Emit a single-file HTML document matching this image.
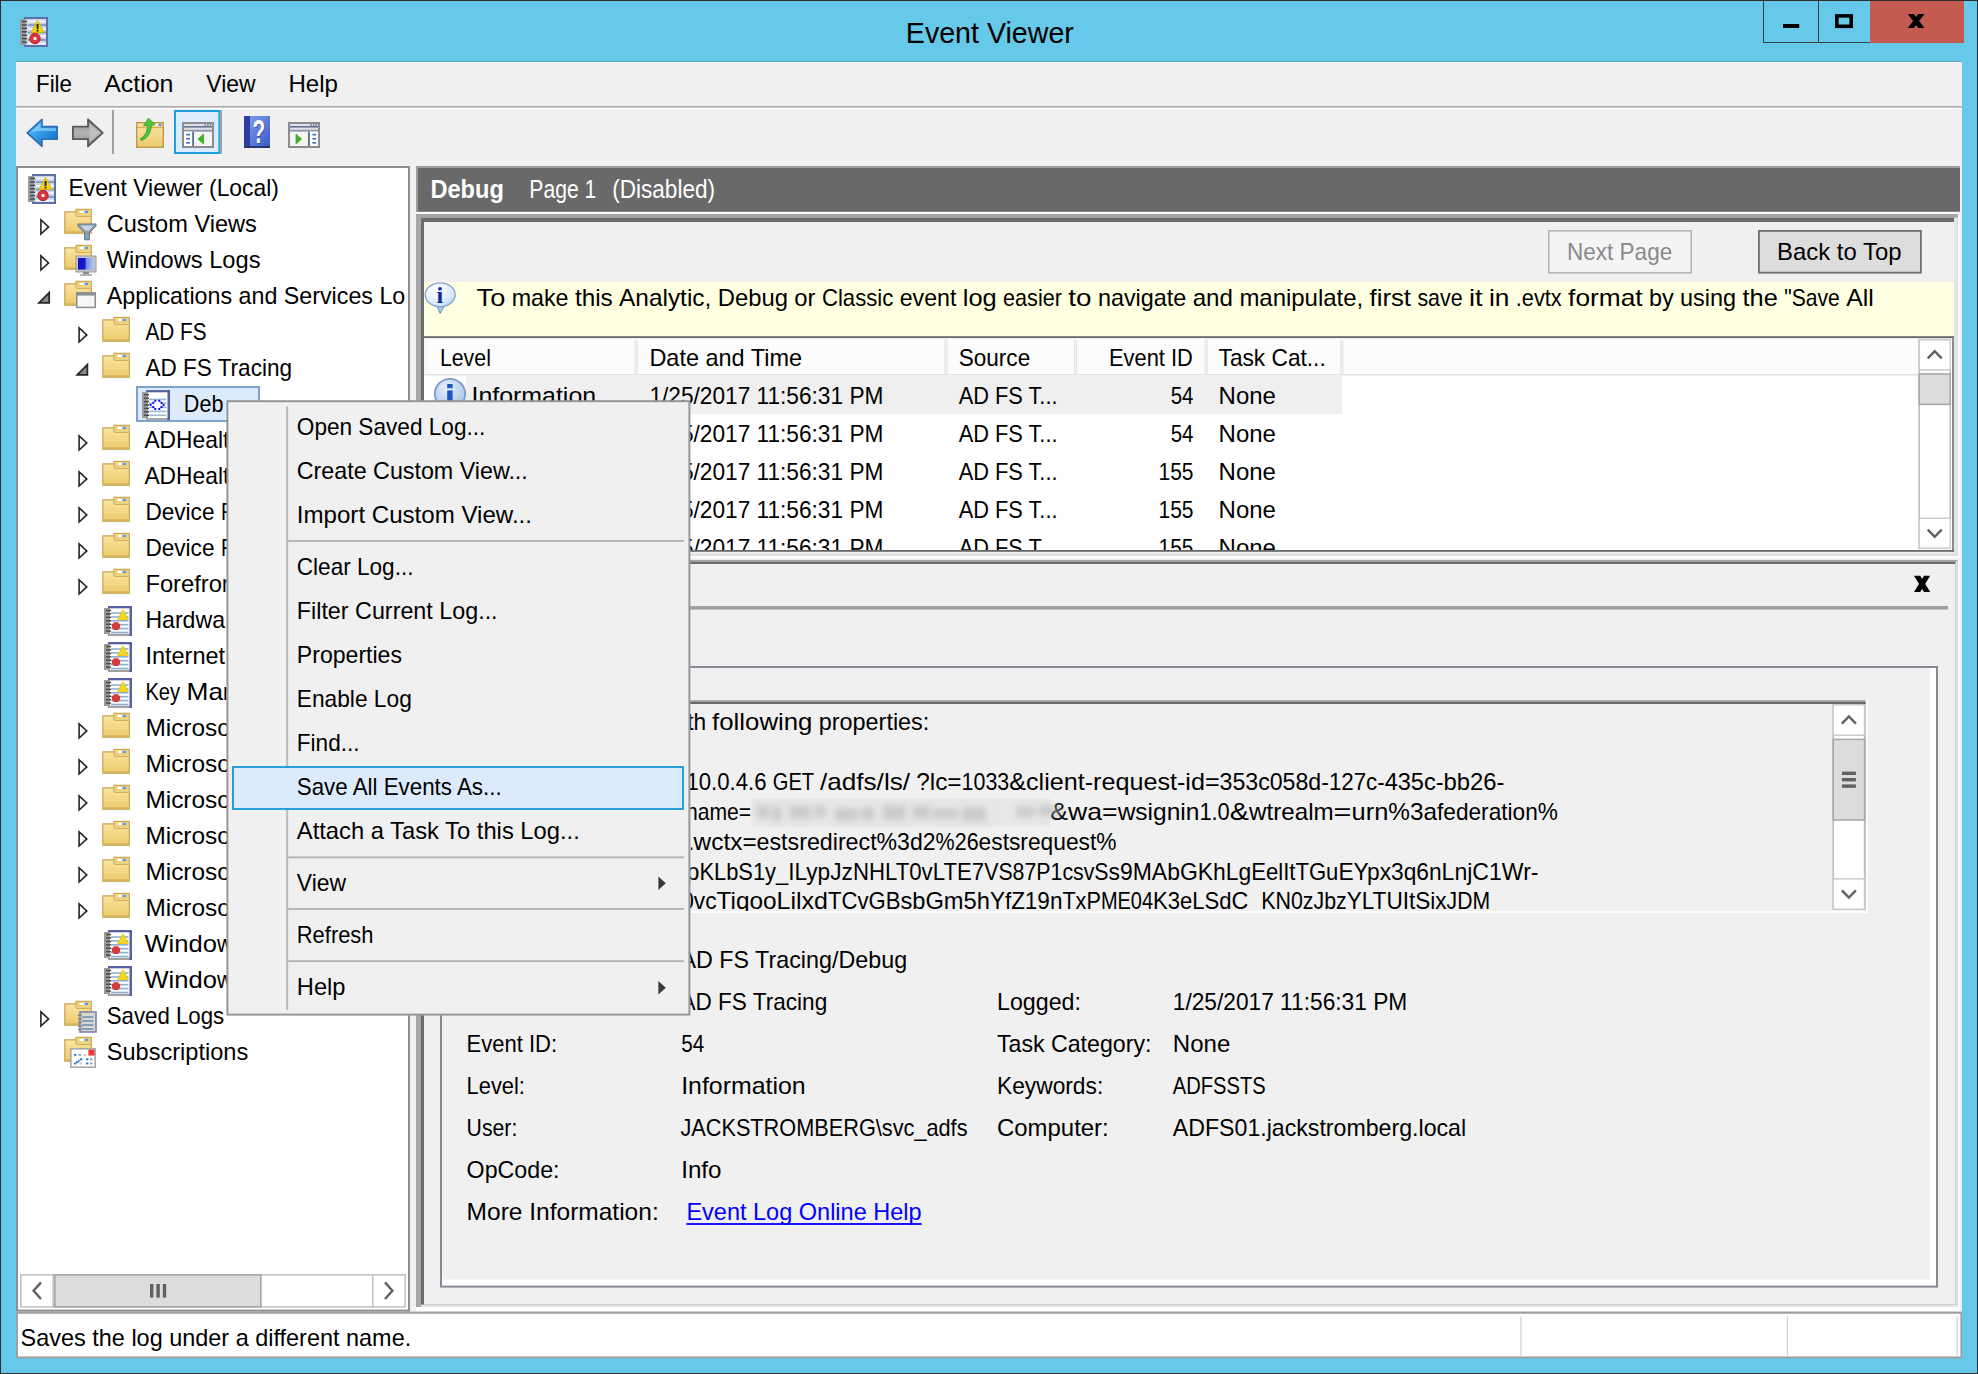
<!DOCTYPE html>
<html lang="en"><head><meta charset="utf-8"><title>Event Viewer</title>
<style>
html,body{margin:0;padding:0;background:#67C9EA}
body{width:1978px;height:1374px}
svg{display:block}
text{font-family:"Liberation Sans",sans-serif;white-space:pre}
</style></head>
<body>
<svg width="1978" height="1374" viewBox="0 0 1978 1374">
<defs>
<linearGradient id="gFold" x1="0" y1="0" x2="0" y2="1"><stop offset="0" stop-color="#FBE8A8"/><stop offset="1" stop-color="#EDC96C"/></linearGradient>
<linearGradient id="gBack" x1="0" y1="0" x2="1" y2="1"><stop offset="0" stop-color="#5CCBFF"/><stop offset="1" stop-color="#0A64C8"/></linearGradient>
<linearGradient id="gFwd" x1="0" y1="0" x2="0" y2="1"><stop offset="0" stop-color="#8A8A8A"/><stop offset="0.5" stop-color="#B4B4B4"/><stop offset="1" stop-color="#8A8A8A"/></linearGradient>
<linearGradient id="gHelp" x1="0" y1="0" x2="1" y2="1"><stop offset="0" stop-color="#8AA4F0"/><stop offset="1" stop-color="#3558C8"/></linearGradient>
<linearGradient id="gMon" x1="0" y1="0" x2="1" y2="0"><stop offset="0" stop-color="#1212C0"/><stop offset="0.45" stop-color="#1818C8"/><stop offset="0.5" stop-color="#6F8CE8"/><stop offset="1" stop-color="#B4C8F4"/></linearGradient>
<radialGradient id="gInfo" cx="0.4" cy="0.3" r="0.8"><stop offset="0" stop-color="#E8F2FD"/><stop offset="1" stop-color="#9DBCE4"/></radialGradient>
<radialGradient id="gBal" cx="0.35" cy="0.3" r="0.9"><stop offset="0" stop-color="#FFFFFF"/><stop offset="0.6" stop-color="#DCEBFA"/><stop offset="1" stop-color="#A6C6EC"/></radialGradient>
<filter id="blur6" x="-5%" y="-30%" width="110%" height="160%"><feGaussianBlur stdDeviation="3"/></filter>
</defs>
<g id="window-frame">
<rect x="0" y="0" width="1978" height="1374" fill="#2E2E2E" />
<rect x="1" y="1" width="1976" height="1372" fill="#67C9EA" />
<g>
<rect x="25" y="18" width="22" height="28" fill="#C5D5EA" stroke="#5F6FA8" stroke-width="2"/>
<rect x="28" y="20.5" width="18" height="1.8" fill="#F4F8FC"/>
<rect x="28" y="24.2" width="18" height="1.8" fill="#7F97C4"/>
<rect x="28" y="27.9" width="18" height="1.8" fill="#F4F8FC"/>
<rect x="28" y="31.6" width="18" height="1.8" fill="#7F97C4"/>
<rect x="28" y="35.3" width="18" height="1.8" fill="#F4F8FC"/>
<rect x="28" y="39.0" width="18" height="1.8" fill="#7F97C4"/>
<rect x="28" y="42.7" width="18" height="1.8" fill="#F4F8FC"/>
<rect x="20" y="19" width="6" height="26" fill="#9A9A9A"/>
<rect x="22" y="20.8" width="5" height="1.44" fill="#4A4A4A"/>
<rect x="22" y="24.2286" width="5" height="1.44" fill="#4A4A4A"/>
<rect x="22" y="27.6571" width="5" height="1.44" fill="#4A4A4A"/>
<rect x="22" y="31.0857" width="5" height="1.44" fill="#4A4A4A"/>
<rect x="22" y="34.5143" width="5" height="1.44" fill="#4A4A4A"/>
<rect x="22" y="37.9429" width="5" height="1.44" fill="#4A4A4A"/>
<rect x="22" y="41.3714" width="5" height="1.44" fill="#4A4A4A"/>
<path d="M37.5 20.5 L44 32.5 L31 32.5 Z" fill="#F2D21B" stroke="#D8B400" stroke-width="1"/>
<rect x="36.6" y="24" width="1.9" height="5" fill="#202020"/><rect x="36.6" y="29.8" width="1.9" height="1.7" fill="#202020"/>
<circle cx="35" cy="38.5" r="5.2" fill="#D8363A" stroke="#B02428" stroke-width="1"/>
<rect x="33.6" y="37.1" width="2.8" height="2.8" fill="#fff"/>
</g>
<text x="905.80" y="42.8" font-size="30" fill="#000" textLength="168.1" lengthAdjust="spacingAndGlyphs" >Event Viewer</text>
<rect x="1870" y="1" width="94" height="42" fill="#C45B50" />
<rect x="1763" y="1" width="1" height="42" fill="#3A3F42" />
<rect x="1818" y="1" width="1" height="42" fill="#3A3F42" />
<rect x="1763" y="42" width="107" height="1" fill="#3A3F42" />
<rect x="1783" y="24" width="16.2" height="4" fill="#000" />
<rect x="1836.8" y="15.9" width="14.4" height="10.4" fill="none" stroke="#000" stroke-width="3.6"/>
<path d="M1907.8 14 H1913.8999999999999 L1924.4 28 H1918.3000000000002 Z" fill="#000"/><path d="M1924.4 14 H1918.3000000000002 L1907.8 28 H1913.8999999999999 Z" fill="#000"/>
</g>
<g id="client">
<rect x="16" y="61" width="1946" height="1297" fill="#5FA9C4" />
<rect x="16" y="62" width="1946" height="1296" fill="#F0F0F0" />
</g>
<g id="menubar">
<text x="36.00" y="91.6" font-size="24" fill="#000" textLength="36.0" lengthAdjust="spacingAndGlyphs" >File</text>
<text x="104.20" y="91.6" font-size="24" fill="#000" textLength="69.2" lengthAdjust="spacingAndGlyphs" >Action</text>
<text x="206.30" y="91.6" font-size="24" fill="#000" textLength="49.3" lengthAdjust="spacingAndGlyphs" >View</text>
<text x="288.40" y="91.6" font-size="24" fill="#000" textLength="49.5" lengthAdjust="spacingAndGlyphs" >Help</text>
<rect x="16" y="106" width="1946" height="1.8" fill="#ADADAD" />
<rect x="16" y="107.8" width="1946" height="1.6" fill="#F8FAFC" />
</g>
<g id="toolbar">
<path d="M27.2 132.9 L42 119.4 V126.6 H57.2 V139.2 H42 V146.4 Z" fill="url(#gBack)" stroke="#2F6EB4" stroke-width="1.6" stroke-linejoin="round"/>
<path d="M30 133 L40.4 123 V128 H56 V131 H36 Z" fill="#9BE0FF" opacity="0.55"/>
<path d="M102.8 132.9 L88 119.4 V126.6 H72.9 V139.2 H88 V146.4 Z" fill="url(#gFwd)" stroke="#585858" stroke-width="1.8" stroke-linejoin="round"/>
<path d="M89.6 123.5 L99.8 132.9 L89.6 142.3 Z" fill="#C8C8C8" opacity="0.7"/>
<rect x="112" y="110" width="2" height="44" fill="#A0A0A0" />
<rect x="136.7" y="122.7" width="26.6" height="24.6" fill="url(#gFold)" stroke="#C09A48" stroke-width="1.4"/>
<rect x="137" y="126.6" width="26" height="1.5" fill="#D8B25C"/>
<rect x="155.6" y="123.8" width="3" height="2" fill="#fff"/><rect x="158.4" y="123.8" width="3.2" height="2" fill="#4F8CF0"/>
<path d="M140.4 138.6 C145 136.6 147.4 131 147.6 125.4 L143.6 125.4 L148.6 118.2 L155 124.6 L151.4 125.2 C151 133 147 138.6 141.4 140.6 Z" fill="#4CC83C" stroke="#3A9A2E" stroke-width="0.9" stroke-linejoin="round"/>
<rect x="174" y="110" width="46.4" height="44" fill="#1C9FDF" />
<rect x="176" y="112" width="42.4" height="40" fill="#DDECFD" />
<rect x="220.4" y="110" width="1.6" height="44" fill="#9A9A9A" />
<rect x="183" y="123" width="30" height="24" fill="#F4F4F4" stroke="#8C8C8C" stroke-width="2"/>
<rect x="184" y="124" width="28" height="2" fill="#DDE2EA"/>
<rect x="184" y="126" width="28" height="1.8" fill="#6B7590"/>
<rect x="184" y="127.8" width="28" height="2" fill="#DDE2EA"/>
<rect x="184" y="129.8" width="28" height="1.8" fill="#8A92A8"/>
<rect x="204.4" y="124.2" width="1.5" height="1.6" fill="#6B7590"/>
<rect x="207" y="124.2" width="1.5" height="1.6" fill="#6B7590"/>
<rect x="209.6" y="124.2" width="1.5" height="1.6" fill="#6B7590"/>
<rect x="184" y="131.6" width="8.2" height="14.4" fill="#FFFFFF"/>
<rect x="192.2" y="131.6" width="1.8" height="14.4" fill="#5D6B8C"/>
<rect x="186.2" y="133.8" width="3.8" height="1.7" fill="#3A78C6"/>
<rect x="186.2" y="137.9" width="3.8" height="1.7" fill="#3A78C6"/>
<rect x="186.2" y="142.0" width="3.8" height="1.7" fill="#3A78C6"/>
<path d="M198 139 L203.6 134 V144 Z" fill="#3FAE2A" stroke="#3FAE2A" stroke-width="0.8" stroke-linejoin="round"/>
<rect x="244" y="116" width="26" height="32" fill="url(#gHelp)"/>
<rect x="244" y="116" width="6" height="32" fill="#2C3F9C"/>
<rect x="244" y="146" width="26" height="2" fill="#2A356C"/>
<text x="253.6" y="143.6" font-size="33" font-weight="bold" fill="#27357F" opacity="0.55" textLength="12.6" lengthAdjust="spacingAndGlyphs">?</text>
<text x="252.6" y="142.6" font-size="33" font-weight="bold" fill="#FFFFFF" textLength="12.6" lengthAdjust="spacingAndGlyphs">?</text>
<rect x="289" y="123" width="30" height="24" fill="#F4F4F4" stroke="#8C8C8C" stroke-width="2"/>
<rect x="290" y="124" width="28" height="2" fill="#DDE2EA"/>
<rect x="290" y="126" width="28" height="1.8" fill="#6B7590"/>
<rect x="290" y="127.8" width="28" height="2" fill="#DDE2EA"/>
<rect x="290" y="129.8" width="28" height="1.8" fill="#8A92A8"/>
<rect x="310.4" y="124.2" width="1.5" height="1.6" fill="#6B7590"/>
<rect x="313" y="124.2" width="1.5" height="1.6" fill="#6B7590"/>
<rect x="315.6" y="124.2" width="1.5" height="1.6" fill="#6B7590"/>
<rect x="309.8" y="131.6" width="8.2" height="14.4" fill="#FFFFFF"/>
<rect x="308" y="131.6" width="1.8" height="14.4" fill="#5D6B8C"/>
<rect x="312.40000000000003" y="133.8" width="3.8" height="1.7" fill="#3A78C6"/>
<rect x="312.40000000000003" y="137.9" width="3.8" height="1.7" fill="#3A78C6"/>
<rect x="312.40000000000003" y="142.0" width="3.8" height="1.7" fill="#3A78C6"/>
<path d="M301.6 139 L296 134 V144 Z" fill="#3FAE2A" stroke="#3FAE2A" stroke-width="0.8" stroke-linejoin="round"/>
</g>
<g id="tree">
<rect x="16" y="166" width="394" height="1145.6" fill="#8E8E8E" />
<rect x="18" y="168" width="390" height="1141.6" fill="#FFFFFF" />
<clipPath id="cTree"><rect x="18" y="168" width="389" height="1106"/></clipPath>
<g clip-path="url(#cTree)">
<rect x="136" y="386" width="124" height="36" fill="#7DA2CE" />
<rect x="138" y="388" width="120" height="32" fill="#DCEBFC" />
<g>
<rect x="33" y="175.0" width="22" height="28" fill="#C5D5EA" stroke="#5F6FA8" stroke-width="2"/>
<rect x="36" y="177.5" width="18" height="1.8" fill="#F4F8FC"/>
<rect x="36" y="181.2" width="18" height="1.8" fill="#7F97C4"/>
<rect x="36" y="184.9" width="18" height="1.8" fill="#F4F8FC"/>
<rect x="36" y="188.6" width="18" height="1.8" fill="#7F97C4"/>
<rect x="36" y="192.3" width="18" height="1.8" fill="#F4F8FC"/>
<rect x="36" y="196.0" width="18" height="1.8" fill="#7F97C4"/>
<rect x="36" y="199.7" width="18" height="1.8" fill="#F4F8FC"/>
<rect x="28" y="176" width="6" height="26" fill="#9A9A9A"/>
<rect x="30" y="177.8" width="5" height="1.44" fill="#4A4A4A"/>
<rect x="30" y="181.229" width="5" height="1.44" fill="#4A4A4A"/>
<rect x="30" y="184.657" width="5" height="1.44" fill="#4A4A4A"/>
<rect x="30" y="188.086" width="5" height="1.44" fill="#4A4A4A"/>
<rect x="30" y="191.514" width="5" height="1.44" fill="#4A4A4A"/>
<rect x="30" y="194.943" width="5" height="1.44" fill="#4A4A4A"/>
<rect x="30" y="198.371" width="5" height="1.44" fill="#4A4A4A"/>
<path d="M45.5 177.5 L52 189.5 L39 189.5 Z" fill="#F2D21B" stroke="#D8B400" stroke-width="1"/>
<rect x="44.6" y="181.0" width="1.9" height="5" fill="#202020"/><rect x="44.6" y="186.8" width="1.9" height="1.7" fill="#202020"/>
<circle cx="43" cy="195.5" r="5.2" fill="#D8363A" stroke="#B02428" stroke-width="1"/>
<rect x="41.6" y="194.1" width="2.8" height="2.8" fill="#fff"/>
</g>
<text x="68.50" y="195.6" font-size="24" fill="#000" textLength="210.4" lengthAdjust="spacingAndGlyphs" >Event Viewer (Local)</text>
<path d="M40.9 219.79999999999998 L48.599999999999994 226.89999999999998 L40.9 234.0 Z" fill="#FFFFFF" stroke="#262626" stroke-width="1.6" stroke-linejoin="miter"/>
<g>
<path d="M64.8 211.79999999999998 H76 V209.29999999999998 H91.3 V233.2 H64.8 Z" fill="url(#gFold)" stroke="#C8A550" stroke-width="1.2" stroke-linejoin="round"/>
<path d="M76 211.79999999999998 V215.0 Q76 216.4 78 216.4 H90.8" fill="none" stroke="#D2AE58" stroke-width="1.3"/>
<rect x="76.6" y="209.79999999999998" width="14.2" height="5" fill="#EBC870" opacity="0.75"/>
<rect x="79.6" y="210.79999999999998" width="5" height="2.2" fill="#FFFFFF"/><rect x="84.6" y="210.79999999999998" width="3.4" height="2.2" fill="#4F9CF0"/>
<rect x="65.4" y="231.4" width="25.4" height="1.4" fill="#D9B258"/>
</g>
<path d="M78 224.0 H96 V226.2 L89.4 232.6 V239.8 H84.6 V232.6 L78 226.2 Z" fill="#8CA0B2" stroke="#5F7488" stroke-width="1"/>
<path d="M80.5 225.6 H93.5 L88.6 230.6 H85.4 Z" fill="#C8D6E2"/>
<text x="106.70" y="231.6" font-size="24" fill="#000" textLength="150.1" lengthAdjust="spacingAndGlyphs" >Custom Views</text>
<path d="M40.9 255.8 L48.599999999999994 262.90000000000003 L40.9 270.0 Z" fill="#FFFFFF" stroke="#262626" stroke-width="1.6" stroke-linejoin="miter"/>
<g>
<path d="M64.8 247.8 H76 V245.3 H91.3 V269.20000000000005 H64.8 Z" fill="url(#gFold)" stroke="#C8A550" stroke-width="1.2" stroke-linejoin="round"/>
<path d="M76 247.8 V251.00000000000003 Q76 252.40000000000003 78 252.40000000000003 H90.8" fill="none" stroke="#D2AE58" stroke-width="1.3"/>
<rect x="76.6" y="245.8" width="14.2" height="5" fill="#EBC870" opacity="0.75"/>
<rect x="79.6" y="246.8" width="5" height="2.2" fill="#FFFFFF"/><rect x="84.6" y="246.8" width="3.4" height="2.2" fill="#4F9CF0"/>
<rect x="65.4" y="267.40000000000003" width="25.4" height="1.4" fill="#D9B258"/>
</g>
<rect x="76" y="256.0" width="20" height="16" fill="#C4C4C4" stroke="#9A9A9A" stroke-width="1"/>
<rect x="78" y="258.0" width="16" height="11.6" fill="url(#gMon)"/>
<rect x="83" y="272.0" width="6" height="2" fill="#8E8E8E"/><rect x="80" y="274.0" width="12" height="2" fill="#B4B4B4"/>
<text x="106.70" y="267.6" font-size="24" fill="#000" textLength="153.8" lengthAdjust="spacingAndGlyphs" >Windows Logs</text>
<path d="M49.199999999999996 292.6 V302.8 H38.99999999999999 Z" fill="#8A8A8A" stroke="#262626" stroke-width="1.7" stroke-linejoin="miter"/>
<g>
<path d="M64.8 283.8 H76 V281.3 H91.3 V305.20000000000005 H64.8 Z" fill="url(#gFold)" stroke="#C8A550" stroke-width="1.2" stroke-linejoin="round"/>
<path d="M76 283.8 V287.0 Q76 288.40000000000003 78 288.40000000000003 H90.8" fill="none" stroke="#D2AE58" stroke-width="1.3"/>
<rect x="76.6" y="281.8" width="14.2" height="5" fill="#EBC870" opacity="0.75"/>
<rect x="79.6" y="282.8" width="5" height="2.2" fill="#FFFFFF"/><rect x="84.6" y="282.8" width="3.4" height="2.2" fill="#4F9CF0"/>
<rect x="65.4" y="303.40000000000003" width="25.4" height="1.4" fill="#D9B258"/>
</g>
<rect x="76.8" y="293.00000000000006" width="18.4" height="14.4" fill="#F7F7F7" stroke="#8C9198" stroke-width="1.6"/>
<rect x="76" y="292.20000000000005" width="20" height="3.4" fill="#8C9198"/>
<text x="106.70" y="303.6" font-size="24" fill="#000" textLength="298.6" lengthAdjust="spacingAndGlyphs" >Applications and Services Lo</text>
<path d="M79.1 327.80000000000007 L86.8 334.90000000000003 L79.1 342.00000000000006 Z" fill="#FFFFFF" stroke="#262626" stroke-width="1.6" stroke-linejoin="miter"/>
<g>
<path d="M102.8 319.8 H114 V317.3 H129.3 V341.20000000000005 H102.8 Z" fill="url(#gFold)" stroke="#C8A550" stroke-width="1.2" stroke-linejoin="round"/>
<path d="M114 319.8 V323.0 Q114 324.40000000000003 116 324.40000000000003 H128.8" fill="none" stroke="#D2AE58" stroke-width="1.3"/>
<rect x="114.6" y="317.8" width="14.2" height="5" fill="#EBC870" opacity="0.75"/>
<rect x="117.6" y="318.8" width="5" height="2.2" fill="#FFFFFF"/><rect x="122.6" y="318.8" width="3.4" height="2.2" fill="#4F9CF0"/>
<rect x="103.4" y="339.40000000000003" width="25.4" height="1.4" fill="#D9B258"/>
</g>
<text x="145.40" y="339.6" font-size="24" fill="#000" textLength="61.1" lengthAdjust="spacingAndGlyphs" >AD FS</text>
<path d="M87.4 364.6 V374.8 H77.2 Z" fill="#8A8A8A" stroke="#262626" stroke-width="1.7" stroke-linejoin="miter"/>
<g>
<path d="M102.8 355.8 H114 V353.3 H129.3 V377.20000000000005 H102.8 Z" fill="url(#gFold)" stroke="#C8A550" stroke-width="1.2" stroke-linejoin="round"/>
<path d="M114 355.8 V359.0 Q114 360.40000000000003 116 360.40000000000003 H128.8" fill="none" stroke="#D2AE58" stroke-width="1.3"/>
<rect x="114.6" y="353.8" width="14.2" height="5" fill="#EBC870" opacity="0.75"/>
<rect x="117.6" y="354.8" width="5" height="2.2" fill="#FFFFFF"/><rect x="122.6" y="354.8" width="3.4" height="2.2" fill="#4F9CF0"/>
<rect x="103.4" y="375.40000000000003" width="25.4" height="1.4" fill="#D9B258"/>
</g>
<text x="145.40" y="375.6" font-size="24" fill="#000" textLength="146.6" lengthAdjust="spacingAndGlyphs" >AD FS Tracing</text>
<g>
<rect x="146" y="390.20000000000005" width="24" height="30" fill="#A8A8A8"/>
<rect x="146" y="390.20000000000005" width="24" height="2.2" fill="#5560A0"/>
<rect x="167.4" y="390.20000000000005" width="2.6" height="30" fill="#5560A0"/>
<rect x="148" y="392.40000000000003" width="19.4" height="25.6" fill="#FFFFFF"/>
<rect x="149" y="398.6" width="17.4" height="1.6" fill="#9CBAD4"/>
<rect x="149" y="402.5" width="17.4" height="1.6" fill="#9CBAD4"/>
<rect x="149" y="406.6" width="17.4" height="1.6" fill="#9CBAD4"/>
<rect x="149" y="410.6" width="17.4" height="1.6" fill="#9CBAD4"/>
<rect x="149" y="414.5" width="17.4" height="1.6" fill="#9CBAD4"/>
<rect x="142" y="392.2" width="6" height="26" fill="#9A9A9A"/>
<rect x="144" y="394" width="5" height="1.44" fill="#4A4A4A"/>
<rect x="144" y="397.429" width="5" height="1.44" fill="#4A4A4A"/>
<rect x="144" y="400.857" width="5" height="1.44" fill="#4A4A4A"/>
<rect x="144" y="404.286" width="5" height="1.44" fill="#4A4A4A"/>
<rect x="144" y="407.714" width="5" height="1.44" fill="#4A4A4A"/>
<rect x="144" y="411.143" width="5" height="1.44" fill="#4A4A4A"/>
<rect x="144" y="414.571" width="5" height="1.44" fill="#4A4A4A"/>
<path d="M150.6 404.90000000000003 L157 400.3 L163.4 404.90000000000003 L157 409.50000000000006 Z" fill="#FFFFFF"/>
<rect x="149.6" y="403.9" width="2" height="2" fill="#0A0AF0"/>
<rect x="152.3" y="401.8" width="2" height="2" fill="#0A0AF0"/>
<rect x="152.3" y="406.0" width="2" height="2" fill="#0A0AF0"/>
<rect x="154.3" y="399.8" width="2" height="2" fill="#0A0AF0"/>
<rect x="154.3" y="408.0" width="2" height="2" fill="#0A0AF0"/>
<rect x="158.3" y="399.8" width="2" height="2" fill="#0A0AF0"/>
<rect x="158.3" y="408.0" width="2" height="2" fill="#0A0AF0"/>
<rect x="160.5" y="401.8" width="2" height="2" fill="#0A0AF0"/>
<rect x="160.5" y="406.0" width="2" height="2" fill="#0A0AF0"/>
<rect x="162.6" y="403.9" width="2" height="2" fill="#0A0AF0"/>
</g>
<clipPath id="cDbg"><rect x="136" y="386" width="87" height="36"/></clipPath><g clip-path="url(#cDbg)">
<text y="411.6" font-size="24" fill="#000" ><tspan x="183.80" textLength="39.6" lengthAdjust="spacingAndGlyphs">Deb</tspan><tspan x="223.40" textLength="27.7" lengthAdjust="spacingAndGlyphs">ug</tspan></text>
</g>
<path d="M79.1 435.80000000000007 L86.8 442.90000000000003 L79.1 450.00000000000006 Z" fill="#FFFFFF" stroke="#262626" stroke-width="1.6" stroke-linejoin="miter"/>
<g>
<path d="M102.8 427.8 H114 V425.3 H129.3 V449.20000000000005 H102.8 Z" fill="url(#gFold)" stroke="#C8A550" stroke-width="1.2" stroke-linejoin="round"/>
<path d="M114 427.8 V431.0 Q114 432.40000000000003 116 432.40000000000003 H128.8" fill="none" stroke="#D2AE58" stroke-width="1.3"/>
<rect x="114.6" y="425.8" width="14.2" height="5" fill="#EBC870" opacity="0.75"/>
<rect x="117.6" y="426.8" width="5" height="2.2" fill="#FFFFFF"/><rect x="122.6" y="426.8" width="3.4" height="2.2" fill="#4F9CF0"/>
<rect x="103.4" y="447.40000000000003" width="25.4" height="1.4" fill="#D9B258"/>
</g>
<text y="447.6" font-size="24" fill="#000" ><tspan x="144.40" textLength="78.6" lengthAdjust="spacingAndGlyphs">ADHeal</tspan><tspan x="223.00" textLength="6.4" lengthAdjust="spacingAndGlyphs">t</tspan></text>
<path d="M79.1 471.80000000000007 L86.8 478.90000000000003 L79.1 486.00000000000006 Z" fill="#FFFFFF" stroke="#262626" stroke-width="1.6" stroke-linejoin="miter"/>
<g>
<path d="M102.8 463.8 H114 V461.3 H129.3 V485.20000000000005 H102.8 Z" fill="url(#gFold)" stroke="#C8A550" stroke-width="1.2" stroke-linejoin="round"/>
<path d="M114 463.8 V467.0 Q114 468.40000000000003 116 468.40000000000003 H128.8" fill="none" stroke="#D2AE58" stroke-width="1.3"/>
<rect x="114.6" y="461.8" width="14.2" height="5" fill="#EBC870" opacity="0.75"/>
<rect x="117.6" y="462.8" width="5" height="2.2" fill="#FFFFFF"/><rect x="122.6" y="462.8" width="3.4" height="2.2" fill="#4F9CF0"/>
<rect x="103.4" y="483.40000000000003" width="25.4" height="1.4" fill="#D9B258"/>
</g>
<text y="483.6" font-size="24" fill="#000" ><tspan x="144.40" textLength="78.6" lengthAdjust="spacingAndGlyphs">ADHeal</tspan><tspan x="223.00" textLength="6.4" lengthAdjust="spacingAndGlyphs">t</tspan></text>
<path d="M79.1 507.80000000000007 L86.8 514.9000000000001 L79.1 522.0 Z" fill="#FFFFFF" stroke="#262626" stroke-width="1.6" stroke-linejoin="miter"/>
<g>
<path d="M102.8 499.8 H114 V497.3 H129.3 V521.2 H102.8 Z" fill="url(#gFold)" stroke="#C8A550" stroke-width="1.2" stroke-linejoin="round"/>
<path d="M114 499.8 V503.0 Q114 504.40000000000003 116 504.40000000000003 H128.8" fill="none" stroke="#D2AE58" stroke-width="1.3"/>
<rect x="114.6" y="497.8" width="14.2" height="5" fill="#EBC870" opacity="0.75"/>
<rect x="117.6" y="498.8" width="5" height="2.2" fill="#FFFFFF"/><rect x="122.6" y="498.8" width="3.4" height="2.2" fill="#4F9CF0"/>
<rect x="103.4" y="519.4" width="25.4" height="1.4" fill="#D9B258"/>
</g>
<text y="519.6" font-size="24" fill="#000" ><tspan x="145.40" textLength="69.1" lengthAdjust="spacingAndGlyphs">Device</tspan> <tspan x="220.90" textLength="14.1" lengthAdjust="spacingAndGlyphs">R</tspan></text>
<path d="M79.1 543.8000000000001 L86.8 550.9000000000001 L79.1 558.0 Z" fill="#FFFFFF" stroke="#262626" stroke-width="1.6" stroke-linejoin="miter"/>
<g>
<path d="M102.8 535.8000000000001 H114 V533.3000000000001 H129.3 V557.2 H102.8 Z" fill="url(#gFold)" stroke="#C8A550" stroke-width="1.2" stroke-linejoin="round"/>
<path d="M114 535.8000000000001 V539.0 Q114 540.4 116 540.4 H128.8" fill="none" stroke="#D2AE58" stroke-width="1.3"/>
<rect x="114.6" y="533.8000000000001" width="14.2" height="5" fill="#EBC870" opacity="0.75"/>
<rect x="117.6" y="534.8000000000001" width="5" height="2.2" fill="#FFFFFF"/><rect x="122.6" y="534.8000000000001" width="3.4" height="2.2" fill="#4F9CF0"/>
<rect x="103.4" y="555.4" width="25.4" height="1.4" fill="#D9B258"/>
</g>
<text y="555.6" font-size="24" fill="#000" ><tspan x="145.40" textLength="69.1" lengthAdjust="spacingAndGlyphs">Device</tspan> <tspan x="220.90" textLength="14.1" lengthAdjust="spacingAndGlyphs">R</tspan></text>
<path d="M79.1 579.8000000000001 L86.8 586.9000000000001 L79.1 594.0 Z" fill="#FFFFFF" stroke="#262626" stroke-width="1.6" stroke-linejoin="miter"/>
<g>
<path d="M102.8 571.8000000000001 H114 V569.3000000000001 H129.3 V593.2 H102.8 Z" fill="url(#gFold)" stroke="#C8A550" stroke-width="1.2" stroke-linejoin="round"/>
<path d="M114 571.8000000000001 V575.0 Q114 576.4 116 576.4 H128.8" fill="none" stroke="#D2AE58" stroke-width="1.3"/>
<rect x="114.6" y="569.8000000000001" width="14.2" height="5" fill="#EBC870" opacity="0.75"/>
<rect x="117.6" y="570.8000000000001" width="5" height="2.2" fill="#FFFFFF"/><rect x="122.6" y="570.8000000000001" width="3.4" height="2.2" fill="#4F9CF0"/>
<rect x="103.4" y="591.4" width="25.4" height="1.4" fill="#D9B258"/>
</g>
<text y="591.6" font-size="24" fill="#000" ><tspan x="145.40" textLength="76.6" lengthAdjust="spacingAndGlyphs">Forefro</tspan><tspan x="222.00" textLength="11.5" lengthAdjust="spacingAndGlyphs">n</tspan></text>
<g>
<rect x="108" y="606.0" width="24" height="30" fill="#A0A0A0"/>
<rect x="108" y="606.0" width="24" height="2.4" fill="#5560A8"/>
<rect x="129.4" y="606.0" width="2.6" height="30" fill="#5560A8"/>
<rect x="110" y="608.4" width="19.4" height="25.4" fill="#FFFFFF"/>
<rect x="111" y="612.2" width="17.4" height="1.6" fill="#8FB0D0"/>
<rect x="111" y="616.1" width="17.4" height="1.6" fill="#8FB0D0"/>
<rect x="111" y="620.0" width="17.4" height="1.6" fill="#8FB0D0"/>
<rect x="111" y="623.9" width="17.4" height="1.6" fill="#8FB0D0"/>
<rect x="111" y="627.8" width="17.4" height="1.6" fill="#8FB0D0"/>
<rect x="111" y="631.7" width="17.4" height="1.6" fill="#8FB0D0"/>
<rect x="104" y="608" width="6" height="26" fill="#9A9A9A"/>
<rect x="106" y="609.8" width="5" height="1.44" fill="#4A4A4A"/>
<rect x="106" y="613.229" width="5" height="1.44" fill="#4A4A4A"/>
<rect x="106" y="616.657" width="5" height="1.44" fill="#4A4A4A"/>
<rect x="106" y="620.086" width="5" height="1.44" fill="#4A4A4A"/>
<rect x="106" y="623.514" width="5" height="1.44" fill="#4A4A4A"/>
<rect x="106" y="626.943" width="5" height="1.44" fill="#4A4A4A"/>
<rect x="106" y="630.371" width="5" height="1.44" fill="#4A4A4A"/>
<path d="M123 609.8 L128.4 619.6 L117.6 619.6 Z" fill="#F4D825" stroke="#E0C000" stroke-width="0.8"/>
<path d="M113.5 622.2 h5 v1.6 h1.6 v4.6 h-1.6 v1.6 h-5 v-1.6 h-1.6 v-4.6 h1.6 Z" fill="#D23A40"/>
</g>
<text x="145.40" y="627.6" font-size="24" fill="#000" textLength="79.6" lengthAdjust="spacingAndGlyphs" >Hardwa</text>
<g>
<rect x="108" y="642.0" width="24" height="30" fill="#A0A0A0"/>
<rect x="108" y="642.0" width="24" height="2.4" fill="#5560A8"/>
<rect x="129.4" y="642.0" width="2.6" height="30" fill="#5560A8"/>
<rect x="110" y="644.4" width="19.4" height="25.4" fill="#FFFFFF"/>
<rect x="111" y="648.2" width="17.4" height="1.6" fill="#8FB0D0"/>
<rect x="111" y="652.1" width="17.4" height="1.6" fill="#8FB0D0"/>
<rect x="111" y="656.0" width="17.4" height="1.6" fill="#8FB0D0"/>
<rect x="111" y="659.9" width="17.4" height="1.6" fill="#8FB0D0"/>
<rect x="111" y="663.8" width="17.4" height="1.6" fill="#8FB0D0"/>
<rect x="111" y="667.7" width="17.4" height="1.6" fill="#8FB0D0"/>
<rect x="104" y="644" width="6" height="26" fill="#9A9A9A"/>
<rect x="106" y="645.8" width="5" height="1.44" fill="#4A4A4A"/>
<rect x="106" y="649.229" width="5" height="1.44" fill="#4A4A4A"/>
<rect x="106" y="652.657" width="5" height="1.44" fill="#4A4A4A"/>
<rect x="106" y="656.086" width="5" height="1.44" fill="#4A4A4A"/>
<rect x="106" y="659.514" width="5" height="1.44" fill="#4A4A4A"/>
<rect x="106" y="662.943" width="5" height="1.44" fill="#4A4A4A"/>
<rect x="106" y="666.371" width="5" height="1.44" fill="#4A4A4A"/>
<path d="M123 645.8 L128.4 655.6 L117.6 655.6 Z" fill="#F4D825" stroke="#E0C000" stroke-width="0.8"/>
<path d="M113.5 658.2 h5 v1.6 h1.6 v4.6 h-1.6 v1.6 h-5 v-1.6 h-1.6 v-4.6 h1.6 Z" fill="#D23A40"/>
</g>
<text x="145.40" y="663.6" font-size="24" fill="#000" textLength="79.7" lengthAdjust="spacingAndGlyphs" >Internet</text>
<g>
<rect x="108" y="678.0" width="24" height="30" fill="#A0A0A0"/>
<rect x="108" y="678.0" width="24" height="2.4" fill="#5560A8"/>
<rect x="129.4" y="678.0" width="2.6" height="30" fill="#5560A8"/>
<rect x="110" y="680.4" width="19.4" height="25.4" fill="#FFFFFF"/>
<rect x="111" y="684.2" width="17.4" height="1.6" fill="#8FB0D0"/>
<rect x="111" y="688.1" width="17.4" height="1.6" fill="#8FB0D0"/>
<rect x="111" y="692.0" width="17.4" height="1.6" fill="#8FB0D0"/>
<rect x="111" y="695.9" width="17.4" height="1.6" fill="#8FB0D0"/>
<rect x="111" y="699.8" width="17.4" height="1.6" fill="#8FB0D0"/>
<rect x="111" y="703.7" width="17.4" height="1.6" fill="#8FB0D0"/>
<rect x="104" y="680" width="6" height="26" fill="#9A9A9A"/>
<rect x="106" y="681.8" width="5" height="1.44" fill="#4A4A4A"/>
<rect x="106" y="685.229" width="5" height="1.44" fill="#4A4A4A"/>
<rect x="106" y="688.657" width="5" height="1.44" fill="#4A4A4A"/>
<rect x="106" y="692.086" width="5" height="1.44" fill="#4A4A4A"/>
<rect x="106" y="695.514" width="5" height="1.44" fill="#4A4A4A"/>
<rect x="106" y="698.943" width="5" height="1.44" fill="#4A4A4A"/>
<rect x="106" y="702.371" width="5" height="1.44" fill="#4A4A4A"/>
<path d="M123 681.8 L128.4 691.6 L117.6 691.6 Z" fill="#F4D825" stroke="#E0C000" stroke-width="0.8"/>
<path d="M113.5 694.2 h5 v1.6 h1.6 v4.6 h-1.6 v1.6 h-5 v-1.6 h-1.6 v-4.6 h1.6 Z" fill="#D23A40"/>
</g>
<text y="699.6" font-size="24" fill="#000" ><tspan x="145.40" textLength="34.7" lengthAdjust="spacingAndGlyphs">Key</tspan> <tspan x="186.50" textLength="36.5" lengthAdjust="spacingAndGlyphs">Ma</tspan><tspan x="223.00" textLength="11.5" lengthAdjust="spacingAndGlyphs">n</tspan></text>
<path d="M79.1 723.8000000000001 L86.8 730.9000000000001 L79.1 738.0 Z" fill="#FFFFFF" stroke="#262626" stroke-width="1.6" stroke-linejoin="miter"/>
<g>
<path d="M102.8 715.8000000000001 H114 V713.3000000000001 H129.3 V737.2 H102.8 Z" fill="url(#gFold)" stroke="#C8A550" stroke-width="1.2" stroke-linejoin="round"/>
<path d="M114 715.8000000000001 V719.0 Q114 720.4 116 720.4 H128.8" fill="none" stroke="#D2AE58" stroke-width="1.3"/>
<rect x="114.6" y="713.8000000000001" width="14.2" height="5" fill="#EBC870" opacity="0.75"/>
<rect x="117.6" y="714.8000000000001" width="5" height="2.2" fill="#FFFFFF"/><rect x="122.6" y="714.8000000000001" width="3.4" height="2.2" fill="#4F9CF0"/>
<rect x="103.4" y="735.4" width="25.4" height="1.4" fill="#D9B258"/>
</g>
<text y="735.6" font-size="24" fill="#000" ><tspan x="145.40" textLength="71.9" lengthAdjust="spacingAndGlyphs">Micros</tspan><tspan x="217.30" textLength="13.2" lengthAdjust="spacingAndGlyphs">o</tspan></text>
<path d="M79.1 759.8000000000001 L86.8 766.9000000000001 L79.1 774.0 Z" fill="#FFFFFF" stroke="#262626" stroke-width="1.6" stroke-linejoin="miter"/>
<g>
<path d="M102.8 751.8000000000001 H114 V749.3000000000001 H129.3 V773.2 H102.8 Z" fill="url(#gFold)" stroke="#C8A550" stroke-width="1.2" stroke-linejoin="round"/>
<path d="M114 751.8000000000001 V755.0 Q114 756.4 116 756.4 H128.8" fill="none" stroke="#D2AE58" stroke-width="1.3"/>
<rect x="114.6" y="749.8000000000001" width="14.2" height="5" fill="#EBC870" opacity="0.75"/>
<rect x="117.6" y="750.8000000000001" width="5" height="2.2" fill="#FFFFFF"/><rect x="122.6" y="750.8000000000001" width="3.4" height="2.2" fill="#4F9CF0"/>
<rect x="103.4" y="771.4" width="25.4" height="1.4" fill="#D9B258"/>
</g>
<text y="771.6" font-size="24" fill="#000" ><tspan x="145.40" textLength="71.9" lengthAdjust="spacingAndGlyphs">Micros</tspan><tspan x="217.30" textLength="13.2" lengthAdjust="spacingAndGlyphs">o</tspan></text>
<path d="M79.1 795.8000000000001 L86.8 802.9000000000001 L79.1 810.0 Z" fill="#FFFFFF" stroke="#262626" stroke-width="1.6" stroke-linejoin="miter"/>
<g>
<path d="M102.8 787.8000000000001 H114 V785.3000000000001 H129.3 V809.2 H102.8 Z" fill="url(#gFold)" stroke="#C8A550" stroke-width="1.2" stroke-linejoin="round"/>
<path d="M114 787.8000000000001 V791.0 Q114 792.4 116 792.4 H128.8" fill="none" stroke="#D2AE58" stroke-width="1.3"/>
<rect x="114.6" y="785.8000000000001" width="14.2" height="5" fill="#EBC870" opacity="0.75"/>
<rect x="117.6" y="786.8000000000001" width="5" height="2.2" fill="#FFFFFF"/><rect x="122.6" y="786.8000000000001" width="3.4" height="2.2" fill="#4F9CF0"/>
<rect x="103.4" y="807.4" width="25.4" height="1.4" fill="#D9B258"/>
</g>
<text y="807.6" font-size="24" fill="#000" ><tspan x="145.40" textLength="71.9" lengthAdjust="spacingAndGlyphs">Micros</tspan><tspan x="217.30" textLength="13.2" lengthAdjust="spacingAndGlyphs">o</tspan></text>
<path d="M79.1 831.8000000000001 L86.8 838.9000000000001 L79.1 846.0 Z" fill="#FFFFFF" stroke="#262626" stroke-width="1.6" stroke-linejoin="miter"/>
<g>
<path d="M102.8 823.8000000000001 H114 V821.3000000000001 H129.3 V845.2 H102.8 Z" fill="url(#gFold)" stroke="#C8A550" stroke-width="1.2" stroke-linejoin="round"/>
<path d="M114 823.8000000000001 V827.0 Q114 828.4 116 828.4 H128.8" fill="none" stroke="#D2AE58" stroke-width="1.3"/>
<rect x="114.6" y="821.8000000000001" width="14.2" height="5" fill="#EBC870" opacity="0.75"/>
<rect x="117.6" y="822.8000000000001" width="5" height="2.2" fill="#FFFFFF"/><rect x="122.6" y="822.8000000000001" width="3.4" height="2.2" fill="#4F9CF0"/>
<rect x="103.4" y="843.4" width="25.4" height="1.4" fill="#D9B258"/>
</g>
<text y="843.6" font-size="24" fill="#000" ><tspan x="145.40" textLength="71.9" lengthAdjust="spacingAndGlyphs">Micros</tspan><tspan x="217.30" textLength="13.2" lengthAdjust="spacingAndGlyphs">o</tspan></text>
<path d="M79.1 867.8000000000001 L86.8 874.9000000000001 L79.1 882.0 Z" fill="#FFFFFF" stroke="#262626" stroke-width="1.6" stroke-linejoin="miter"/>
<g>
<path d="M102.8 859.8000000000001 H114 V857.3000000000001 H129.3 V881.2 H102.8 Z" fill="url(#gFold)" stroke="#C8A550" stroke-width="1.2" stroke-linejoin="round"/>
<path d="M114 859.8000000000001 V863.0 Q114 864.4 116 864.4 H128.8" fill="none" stroke="#D2AE58" stroke-width="1.3"/>
<rect x="114.6" y="857.8000000000001" width="14.2" height="5" fill="#EBC870" opacity="0.75"/>
<rect x="117.6" y="858.8000000000001" width="5" height="2.2" fill="#FFFFFF"/><rect x="122.6" y="858.8000000000001" width="3.4" height="2.2" fill="#4F9CF0"/>
<rect x="103.4" y="879.4" width="25.4" height="1.4" fill="#D9B258"/>
</g>
<text y="879.6" font-size="24" fill="#000" ><tspan x="145.40" textLength="71.9" lengthAdjust="spacingAndGlyphs">Micros</tspan><tspan x="217.30" textLength="13.2" lengthAdjust="spacingAndGlyphs">o</tspan></text>
<path d="M79.1 903.8000000000001 L86.8 910.9000000000001 L79.1 918.0 Z" fill="#FFFFFF" stroke="#262626" stroke-width="1.6" stroke-linejoin="miter"/>
<g>
<path d="M102.8 895.8000000000001 H114 V893.3000000000001 H129.3 V917.2 H102.8 Z" fill="url(#gFold)" stroke="#C8A550" stroke-width="1.2" stroke-linejoin="round"/>
<path d="M114 895.8000000000001 V899.0 Q114 900.4 116 900.4 H128.8" fill="none" stroke="#D2AE58" stroke-width="1.3"/>
<rect x="114.6" y="893.8000000000001" width="14.2" height="5" fill="#EBC870" opacity="0.75"/>
<rect x="117.6" y="894.8000000000001" width="5" height="2.2" fill="#FFFFFF"/><rect x="122.6" y="894.8000000000001" width="3.4" height="2.2" fill="#4F9CF0"/>
<rect x="103.4" y="915.4" width="25.4" height="1.4" fill="#D9B258"/>
</g>
<text y="915.6" font-size="24" fill="#000" ><tspan x="145.40" textLength="71.9" lengthAdjust="spacingAndGlyphs">Micros</tspan><tspan x="217.30" textLength="13.2" lengthAdjust="spacingAndGlyphs">o</tspan></text>
<g>
<rect x="108" y="930.0" width="24" height="30" fill="#A0A0A0"/>
<rect x="108" y="930.0" width="24" height="2.4" fill="#5560A8"/>
<rect x="129.4" y="930.0" width="2.6" height="30" fill="#5560A8"/>
<rect x="110" y="932.4" width="19.4" height="25.4" fill="#FFFFFF"/>
<rect x="111" y="936.2" width="17.4" height="1.6" fill="#8FB0D0"/>
<rect x="111" y="940.1" width="17.4" height="1.6" fill="#8FB0D0"/>
<rect x="111" y="944.0" width="17.4" height="1.6" fill="#8FB0D0"/>
<rect x="111" y="947.9" width="17.4" height="1.6" fill="#8FB0D0"/>
<rect x="111" y="951.8" width="17.4" height="1.6" fill="#8FB0D0"/>
<rect x="111" y="955.7" width="17.4" height="1.6" fill="#8FB0D0"/>
<rect x="104" y="932" width="6" height="26" fill="#9A9A9A"/>
<rect x="106" y="933.8" width="5" height="1.44" fill="#4A4A4A"/>
<rect x="106" y="937.229" width="5" height="1.44" fill="#4A4A4A"/>
<rect x="106" y="940.657" width="5" height="1.44" fill="#4A4A4A"/>
<rect x="106" y="944.086" width="5" height="1.44" fill="#4A4A4A"/>
<rect x="106" y="947.514" width="5" height="1.44" fill="#4A4A4A"/>
<rect x="106" y="950.943" width="5" height="1.44" fill="#4A4A4A"/>
<rect x="106" y="954.371" width="5" height="1.44" fill="#4A4A4A"/>
<path d="M123 933.8 L128.4 943.6 L117.6 943.6 Z" fill="#F4D825" stroke="#E0C000" stroke-width="0.8"/>
<path d="M113.5 946.2 h5 v1.6 h1.6 v4.6 h-1.6 v1.6 h-5 v-1.6 h-1.6 v-4.6 h1.6 Z" fill="#D23A40"/>
</g>
<text y="951.6" font-size="24" fill="#000" ><tspan x="144.40" textLength="72.5" lengthAdjust="spacingAndGlyphs">Windo</tspan><tspan x="216.92" textLength="15.9" lengthAdjust="spacingAndGlyphs">w</tspan></text>
<g>
<rect x="108" y="966.0" width="24" height="30" fill="#A0A0A0"/>
<rect x="108" y="966.0" width="24" height="2.4" fill="#5560A8"/>
<rect x="129.4" y="966.0" width="2.6" height="30" fill="#5560A8"/>
<rect x="110" y="968.4" width="19.4" height="25.4" fill="#FFFFFF"/>
<rect x="111" y="972.2" width="17.4" height="1.6" fill="#8FB0D0"/>
<rect x="111" y="976.1" width="17.4" height="1.6" fill="#8FB0D0"/>
<rect x="111" y="980.0" width="17.4" height="1.6" fill="#8FB0D0"/>
<rect x="111" y="983.9" width="17.4" height="1.6" fill="#8FB0D0"/>
<rect x="111" y="987.8" width="17.4" height="1.6" fill="#8FB0D0"/>
<rect x="111" y="991.7" width="17.4" height="1.6" fill="#8FB0D0"/>
<rect x="104" y="968" width="6" height="26" fill="#9A9A9A"/>
<rect x="106" y="969.8" width="5" height="1.44" fill="#4A4A4A"/>
<rect x="106" y="973.229" width="5" height="1.44" fill="#4A4A4A"/>
<rect x="106" y="976.657" width="5" height="1.44" fill="#4A4A4A"/>
<rect x="106" y="980.086" width="5" height="1.44" fill="#4A4A4A"/>
<rect x="106" y="983.514" width="5" height="1.44" fill="#4A4A4A"/>
<rect x="106" y="986.943" width="5" height="1.44" fill="#4A4A4A"/>
<rect x="106" y="990.371" width="5" height="1.44" fill="#4A4A4A"/>
<path d="M123 969.8 L128.4 979.6 L117.6 979.6 Z" fill="#F4D825" stroke="#E0C000" stroke-width="0.8"/>
<path d="M113.5 982.2 h5 v1.6 h1.6 v4.6 h-1.6 v1.6 h-5 v-1.6 h-1.6 v-4.6 h1.6 Z" fill="#D23A40"/>
</g>
<text y="987.6" font-size="24" fill="#000" ><tspan x="144.40" textLength="72.5" lengthAdjust="spacingAndGlyphs">Windo</tspan><tspan x="216.92" textLength="15.9" lengthAdjust="spacingAndGlyphs">w</tspan></text>
<path d="M40.9 1011.8000000000001 L48.599999999999994 1018.9000000000001 L40.9 1026.0 Z" fill="#FFFFFF" stroke="#262626" stroke-width="1.6" stroke-linejoin="miter"/>
<g>
<path d="M64.8 1003.8000000000001 H76 V1001.3000000000001 H91.3 V1025.2 H64.8 Z" fill="url(#gFold)" stroke="#C8A550" stroke-width="1.2" stroke-linejoin="round"/>
<path d="M76 1003.8000000000001 V1007.0 Q76 1008.4 78 1008.4 H90.8" fill="none" stroke="#D2AE58" stroke-width="1.3"/>
<rect x="76.6" y="1001.8000000000001" width="14.2" height="5" fill="#EBC870" opacity="0.75"/>
<rect x="79.6" y="1002.8000000000001" width="5" height="2.2" fill="#FFFFFF"/><rect x="84.6" y="1002.8000000000001" width="3.4" height="2.2" fill="#4F9CF0"/>
<rect x="65.4" y="1023.4" width="25.4" height="1.4" fill="#D9B258"/>
</g>
<rect x="80" y="1012.0" width="16" height="20" fill="#D8D8D0" stroke="#7C84A8" stroke-width="1.6"/>
<rect x="82" y="1016" width="11.4" height="2" fill="#7FA0B8"/>
<rect x="82" y="1020" width="11.4" height="2" fill="#7FA0B8"/>
<rect x="82" y="1024" width="11.4" height="2" fill="#7FA0B8"/>
<rect x="82" y="1028" width="11.4" height="2" fill="#7FA0B8"/>
<rect x="78" y="1014.4" width="4" height="1.6" fill="#8A8A8A"/>
<rect x="78" y="1018.0" width="4" height="1.6" fill="#8A8A8A"/>
<rect x="78" y="1021.6" width="4" height="1.6" fill="#8A8A8A"/>
<rect x="78" y="1025.2" width="4" height="1.6" fill="#8A8A8A"/>
<rect x="78" y="1028.8" width="4" height="1.6" fill="#8A8A8A"/>
<text x="106.70" y="1023.6" font-size="24" fill="#000" textLength="117.5" lengthAdjust="spacingAndGlyphs" >Saved Logs</text>
<g>
<path d="M64.8 1039.8 H76 V1037.3 H91.3 V1061.1999999999998 H64.8 Z" fill="url(#gFold)" stroke="#C8A550" stroke-width="1.2" stroke-linejoin="round"/>
<path d="M76 1039.8 V1043.0 Q76 1044.3999999999999 78 1044.3999999999999 H90.8" fill="none" stroke="#D2AE58" stroke-width="1.3"/>
<rect x="76.6" y="1037.8" width="14.2" height="5" fill="#EBC870" opacity="0.75"/>
<rect x="79.6" y="1038.8" width="5" height="2.2" fill="#FFFFFF"/><rect x="84.6" y="1038.8" width="3.4" height="2.2" fill="#4F9CF0"/>
<rect x="65.4" y="1059.3999999999999" width="25.4" height="1.4" fill="#D9B258"/>
</g>
<rect x="70.8" y="1048.8" width="24.4" height="18.4" fill="#FFFFFF" stroke="#A8A8A8" stroke-width="1.6"/>
<rect x="88.4" y="1049.6" width="6" height="6" fill="#F03840"/>
<rect x="74" y="1054" width="2.4" height="1.8" fill="#2A7AC8"/>
<rect x="78.6" y="1054" width="2.4" height="1.8" fill="#8F96B8"/>
<rect x="83.8" y="1054" width="2.4" height="1.8" fill="#E8B8C0"/>
<rect x="80" y="1058.4" width="2.4" height="1.8" fill="#2A7AC8"/>
<rect x="86" y="1058.4" width="2.4" height="1.8" fill="#2A7AC8"/>
<rect x="90" y="1058.4" width="2.4" height="1.8" fill="#8F96B8"/>
<rect x="76" y="1061.2" width="2.4" height="1.8" fill="#2A7AC8"/>
<rect x="74" y="1062.6" width="2.4" height="1.8" fill="#2A7AC8"/>
<rect x="79.6" y="1062.6" width="2.4" height="1.8" fill="#C8C8D8"/>
<rect x="86" y="1062.6" width="2.4" height="1.8" fill="#2A7AC8"/>
<rect x="90" y="1062.6" width="2.4" height="1.8" fill="#8F96B8"/>
<rect x="78" y="1059.8" width="2.4" height="1.8" fill="#4A9AE0"/>
<text x="106.70" y="1059.6" font-size="24" fill="#000" textLength="141.5" lengthAdjust="spacingAndGlyphs" >Subscriptions</text>
</g>
<rect x="20" y="1274" width="386" height="33.6" fill="#C4C4C4" />
<rect x="21.6" y="1275.6" width="382.8" height="30.4" fill="#FFFFFF" />
<rect x="52.4" y="1274" width="1.6" height="33.6" fill="#C4C4C4" />
<rect x="372" y="1274" width="1.6" height="33.6" fill="#C4C4C4" />
<rect x="54" y="1274" width="207.6" height="33.6" fill="#A6A6A6" />
<rect x="55.6" y="1275.6" width="204.4" height="30.4" fill="#DCDCDC" />
<rect x="150" y="1284" width="3.4" height="13.6" fill="#606060" />
<rect x="156.4" y="1284" width="3.4" height="13.6" fill="#606060" />
<rect x="162.8" y="1284" width="3.4" height="13.6" fill="#606060" />
<path d="M41 1282.4 L33.6 1290.8 L41 1299" fill="none" stroke="#606060" stroke-width="2.4"/>
<path d="M385 1282.4 L392.4 1290.8 L385 1299" fill="none" stroke="#606060" stroke-width="2.4"/>
</g>
<g id="result-pane">
<rect x="416" y="166" width="1544" height="46" fill="#9C9C9C" />
<rect x="418" y="168" width="1542" height="43.4" fill="#696969" />
<text x="430.50" y="198.3" font-size="26" fill="#FFFFFF" font-weight="bold" textLength="73.3" lengthAdjust="spacingAndGlyphs" >Debug</text>
<text x="529.30" y="198.3" font-size="26" fill="#FFFFFF" textLength="67.0" lengthAdjust="spacingAndGlyphs" >Page 1</text>
<text x="612.20" y="198.3" font-size="26" fill="#FFFFFF" textLength="102.9" lengthAdjust="spacingAndGlyphs" >(Disabled)</text>
<rect x="416" y="212" width="1544" height="2" fill="#FAFAFA" />
<rect x="416" y="214" width="1544" height="344" fill="#FFFFFF" />
<rect x="416" y="214" width="1541.8" height="341.6" fill="#A6A6A6" />
<rect x="421" y="217.6" width="1536.8" height="338" fill="#E6E6E6" />
<rect x="421" y="217.6" width="1533" height="335.4" fill="#6C6C6C" />
<rect x="424" y="222" width="1530" height="331" fill="#F0F0F0" />
<rect x="1548" y="230" width="144" height="43.6" fill="#B2B6BA" />
<rect x="1549.6" y="231.6" width="140.8" height="40.4" fill="#F4F4F4" />
<text x="1567.00" y="260" font-size="24" fill="#8A8A8A" textLength="105.2" lengthAdjust="spacingAndGlyphs" >Next Page</text>
<rect x="1758" y="230" width="163.8" height="43.6" fill="#707070" />
<rect x="1759.8" y="231.8" width="160.2" height="40" fill="#DDDDDD" />
<text x="1777.00" y="260" font-size="24" fill="#000" textLength="124.5" lengthAdjust="spacingAndGlyphs" >Back to Top</text>
<rect x="424" y="282" width="1530" height="54.4" fill="#FFFFE1" />
<path d="M436.6 304.9 L440.1 313.4 L444.6 304.9 Z" fill="#B4D0F0" stroke="#5E86BC" stroke-width="1"/>
<ellipse cx="440.20000000000005" cy="294.79999999999995" rx="15" ry="12" fill="url(#gBal)" stroke="#7EA0CC" stroke-width="1.2"/>
<text x="439.8" y="303.0" font-size="24" font-weight="bold" fill="#15259A" text-anchor="middle" style="font-family:'Liberation Serif',serif">i</text>
<text y="305.7" font-size="24" fill="#000" ><tspan x="476.60" textLength="28.7" lengthAdjust="spacingAndGlyphs">To</tspan> <tspan x="511.70" textLength="56.8" lengthAdjust="spacingAndGlyphs">make</tspan> <tspan x="574.90" textLength="37.8" lengthAdjust="spacingAndGlyphs">this</tspan> <tspan x="619.10" textLength="92.2" lengthAdjust="spacingAndGlyphs">Analytic,</tspan> <tspan x="717.70" textLength="70.2" lengthAdjust="spacingAndGlyphs">Debug</tspan> <tspan x="794.30" textLength="21.2" lengthAdjust="spacingAndGlyphs">or</tspan> <tspan x="821.90" textLength="71.4" lengthAdjust="spacingAndGlyphs">Classic</tspan> <tspan x="899.70" textLength="56.7" lengthAdjust="spacingAndGlyphs">event</tspan> <tspan x="962.80" textLength="33.9" lengthAdjust="spacingAndGlyphs">log</tspan> <tspan x="1003.10" textLength="58.8" lengthAdjust="spacingAndGlyphs">easier</tspan> <tspan x="1068.30" textLength="23.2" lengthAdjust="spacingAndGlyphs">to</tspan> <tspan x="1097.90" textLength="88.4" lengthAdjust="spacingAndGlyphs">navigate</tspan> <tspan x="1192.70" textLength="40.3" lengthAdjust="spacingAndGlyphs">and</tspan> <tspan x="1239.40" textLength="123.8" lengthAdjust="spacingAndGlyphs">manipulate,</tspan> <tspan x="1369.60" textLength="41.4" lengthAdjust="spacingAndGlyphs">first</tspan> <tspan x="1417.40" textLength="45.2" lengthAdjust="spacingAndGlyphs">save</tspan> <tspan x="1469.00" textLength="13.6" lengthAdjust="spacingAndGlyphs">it</tspan> <tspan x="1489.00" textLength="20.4" lengthAdjust="spacingAndGlyphs">in</tspan> <tspan x="1515.80" textLength="45.9" lengthAdjust="spacingAndGlyphs">.evtx</tspan> <tspan x="1568.10" textLength="74.5" lengthAdjust="spacingAndGlyphs">format</tspan> <tspan x="1649.00" textLength="24.7" lengthAdjust="spacingAndGlyphs">by</tspan> <tspan x="1680.10" textLength="56.0" lengthAdjust="spacingAndGlyphs">using</tspan> <tspan x="1742.50" textLength="35.3" lengthAdjust="spacingAndGlyphs">the</tspan> <tspan x="1784.20" textLength="55.6" lengthAdjust="spacingAndGlyphs">"Save</tspan> <tspan x="1846.20" textLength="27.6" lengthAdjust="spacingAndGlyphs">All</tspan></text>
<rect x="424" y="336.2" width="1530" height="2.2" fill="#696969" />
<rect x="424" y="338.4" width="1528" height="211.6" fill="#FFFFFF" />
<rect x="1952" y="338.4" width="2" height="213.6" fill="#8A8A8A" />
<rect x="424" y="550" width="1530" height="1.8" fill="#696969" />
<rect x="424" y="338.4" width="1494" height="35.6" fill="#FCFCFC" />
<rect x="424" y="338.4" width="3.6" height="35.6" fill="#F6F6F6" />
<rect x="424" y="374" width="1494" height="1.5" fill="#E2E2E2" />
<rect x="634.6" y="339.4" width="3.2" height="34.6" fill="#E4E4E4" />
<rect x="635.6" y="339.4" width="1.2" height="34.6" fill="#F2F2F2" />
<rect x="944.4" y="339.4" width="3.2" height="34.6" fill="#E4E4E4" />
<rect x="945.4" y="339.4" width="1.2" height="34.6" fill="#F2F2F2" />
<rect x="1074" y="339.4" width="3.2" height="34.6" fill="#E4E4E4" />
<rect x="1075" y="339.4" width="1.2" height="34.6" fill="#F2F2F2" />
<rect x="1204.6" y="339.4" width="3.2" height="34.6" fill="#E4E4E4" />
<rect x="1205.6" y="339.4" width="1.2" height="34.6" fill="#F2F2F2" />
<rect x="1340.2" y="339.4" width="3.2" height="34.6" fill="#E4E4E4" />
<rect x="1341.2" y="339.4" width="1.2" height="34.6" fill="#F2F2F2" />
<text x="439.90" y="365.6" font-size="24" fill="#000" textLength="51.0" lengthAdjust="spacingAndGlyphs" >Level</text>
<text x="649.40" y="365.6" font-size="24" fill="#000" textLength="152.7" lengthAdjust="spacingAndGlyphs" >Date and Time</text>
<text x="958.70" y="365.6" font-size="24" fill="#000" textLength="71.5" lengthAdjust="spacingAndGlyphs" >Source</text>
<text x="1109.00" y="365.6" font-size="24" fill="#000" textLength="83.9" lengthAdjust="spacingAndGlyphs" >Event ID</text>
<text x="1218.60" y="365.6" font-size="24" fill="#000" textLength="107.1" lengthAdjust="spacingAndGlyphs" >Task Cat...</text>
<clipPath id="cList"><rect x="424" y="376" width="1494" height="174"/></clipPath><g clip-path="url(#cList)">
<rect x="466" y="376" width="876" height="38" fill="#EFEFEF" />
<circle cx="450" cy="394" r="15.2" fill="url(#gInfo)" stroke="#7F9DC0" stroke-width="1.8"/>
<rect x="447.2" y="384" width="5.4" height="4.2" fill="#1F55C0"/>
<rect x="447.2" y="390.4" width="5.4" height="12.6" fill="#1F55C0"/>
<text x="471.50" y="403.7" font-size="24" fill="#000" textLength="124.6" lengthAdjust="spacingAndGlyphs" >Information</text>
<text x="649.40" y="403.7" font-size="24" fill="#000" textLength="234.0" lengthAdjust="spacingAndGlyphs" >1/25/2017 11:56:31 PM</text>
<text x="958.70" y="403.7" font-size="24" fill="#000" textLength="98.8" lengthAdjust="spacingAndGlyphs" >AD FS T...</text>
<text x="1170.70" y="403.7" font-size="24" fill="#000" textLength="22.8" lengthAdjust="spacingAndGlyphs" >54</text>
<text x="1218.60" y="403.7" font-size="24" fill="#000" textLength="57.3" lengthAdjust="spacingAndGlyphs" >None</text>
<circle cx="450" cy="432" r="15.2" fill="url(#gInfo)" stroke="#7F9DC0" stroke-width="1.8"/>
<rect x="447.2" y="422" width="5.4" height="4.2" fill="#1F55C0"/>
<rect x="447.2" y="428.4" width="5.4" height="12.6" fill="#1F55C0"/>
<text x="471.50" y="441.7" font-size="24" fill="#000" textLength="124.6" lengthAdjust="spacingAndGlyphs" >Information</text>
<text x="649.40" y="441.7" font-size="24" fill="#000" textLength="234.0" lengthAdjust="spacingAndGlyphs" >1/25/2017 11:56:31 PM</text>
<text x="958.70" y="441.7" font-size="24" fill="#000" textLength="98.8" lengthAdjust="spacingAndGlyphs" >AD FS T...</text>
<text x="1170.70" y="441.7" font-size="24" fill="#000" textLength="22.8" lengthAdjust="spacingAndGlyphs" >54</text>
<text x="1218.60" y="441.7" font-size="24" fill="#000" textLength="57.3" lengthAdjust="spacingAndGlyphs" >None</text>
<circle cx="450" cy="470" r="15.2" fill="url(#gInfo)" stroke="#7F9DC0" stroke-width="1.8"/>
<rect x="447.2" y="460" width="5.4" height="4.2" fill="#1F55C0"/>
<rect x="447.2" y="466.4" width="5.4" height="12.6" fill="#1F55C0"/>
<text x="471.50" y="479.7" font-size="24" fill="#000" textLength="124.6" lengthAdjust="spacingAndGlyphs" >Information</text>
<text x="649.40" y="479.7" font-size="24" fill="#000" textLength="234.0" lengthAdjust="spacingAndGlyphs" >1/25/2017 11:56:31 PM</text>
<text x="958.70" y="479.7" font-size="24" fill="#000" textLength="98.8" lengthAdjust="spacingAndGlyphs" >AD FS T...</text>
<text x="1158.50" y="479.7" font-size="24" fill="#000" textLength="35.0" lengthAdjust="spacingAndGlyphs" >155</text>
<text x="1218.60" y="479.7" font-size="24" fill="#000" textLength="57.3" lengthAdjust="spacingAndGlyphs" >None</text>
<circle cx="450" cy="508" r="15.2" fill="url(#gInfo)" stroke="#7F9DC0" stroke-width="1.8"/>
<rect x="447.2" y="498" width="5.4" height="4.2" fill="#1F55C0"/>
<rect x="447.2" y="504.4" width="5.4" height="12.6" fill="#1F55C0"/>
<text x="471.50" y="517.7" font-size="24" fill="#000" textLength="124.6" lengthAdjust="spacingAndGlyphs" >Information</text>
<text x="649.40" y="517.7" font-size="24" fill="#000" textLength="234.0" lengthAdjust="spacingAndGlyphs" >1/25/2017 11:56:31 PM</text>
<text x="958.70" y="517.7" font-size="24" fill="#000" textLength="98.8" lengthAdjust="spacingAndGlyphs" >AD FS T...</text>
<text x="1158.50" y="517.7" font-size="24" fill="#000" textLength="35.0" lengthAdjust="spacingAndGlyphs" >155</text>
<text x="1218.60" y="517.7" font-size="24" fill="#000" textLength="57.3" lengthAdjust="spacingAndGlyphs" >None</text>
<circle cx="450" cy="546" r="15.2" fill="url(#gInfo)" stroke="#7F9DC0" stroke-width="1.8"/>
<rect x="447.2" y="536" width="5.4" height="4.2" fill="#1F55C0"/>
<rect x="447.2" y="542.4" width="5.4" height="12.6" fill="#1F55C0"/>
<text x="471.50" y="555.7" font-size="24" fill="#000" textLength="124.6" lengthAdjust="spacingAndGlyphs" >Information</text>
<text x="649.40" y="555.7" font-size="24" fill="#000" textLength="234.0" lengthAdjust="spacingAndGlyphs" >1/25/2017 11:56:31 PM</text>
<text x="958.70" y="555.7" font-size="24" fill="#000" textLength="98.8" lengthAdjust="spacingAndGlyphs" >AD FS T...</text>
<text x="1158.50" y="555.7" font-size="24" fill="#000" textLength="35.0" lengthAdjust="spacingAndGlyphs" >155</text>
<text x="1218.60" y="555.7" font-size="24" fill="#000" textLength="57.3" lengthAdjust="spacingAndGlyphs" >None</text>
</g>
<rect x="1918.4" y="339" width="32.6" height="210" fill="#BEBEBE" />
<rect x="1920" y="339" width="29.4" height="210" fill="#FFFFFF" />
<rect x="1918.4" y="339" width="32.6" height="31.6" fill="#CDCDCD" />
<rect x="1920" y="340.6" width="29.4" height="28.4" fill="#FFFFFF" />
<rect x="1918.4" y="517.4" width="32.6" height="31.6" fill="#CDCDCD" />
<rect x="1920" y="519" width="29.4" height="28.4" fill="#FFFFFF" />
<path d="M1927.7 358.4 L1934.7 351.19999999999993 L1941.7 358.4" fill="none" stroke="#606060" stroke-width="2.4"/>
<path d="M1927.7 529.6 L1934.7 536.8000000000001 L1941.7 529.6" fill="none" stroke="#606060" stroke-width="2.4"/>
<rect x="1918.4" y="373.2" width="32.6" height="32" fill="#A8A8A8" />
<rect x="1920" y="374.8" width="29.4" height="28.8" fill="#DCDCDC" />
</g>
<g id="detail-pane">
<rect x="416" y="560" width="1544" height="751.6" fill="#FFFFFF" />
<rect x="416" y="560" width="1541.6" height="747" fill="#A6A6A6" />
<rect x="421" y="561.6" width="1536.6" height="745.4" fill="#E4E4E4" />
<rect x="421" y="561.6" width="1534.4" height="743" fill="#6C6C6C" />
<rect x="424" y="564" width="1531.4" height="740.6" fill="#F0F0F0" />
<path d="M1914 575.8 H1920.2 L1930.2 592 H1924.0 Z" fill="#000"/><path d="M1930.2 575.8 H1924.0 L1914 592 H1920.2 Z" fill="#000"/>
<rect x="424" y="606" width="1524" height="3.6" fill="#A0A0A0" />
<rect x="440" y="666" width="1498" height="621.6" fill="#868A93" />
<rect x="442" y="668" width="1494" height="617.6" fill="#FFFFFF" />
<rect x="442" y="668" width="1488" height="611.6" fill="#F0F0F0" />
<rect x="462" y="700.2" width="1405.6" height="212.8" fill="#FFFFFF" />
<rect x="462" y="700.2" width="1403.6" height="210.8" fill="#A0A0A0" />
<rect x="464" y="702" width="1401.6" height="209" fill="#696969" />
<rect x="466" y="704" width="1399.6" height="207" fill="#F0F0F0" />
<clipPath id="cTxt"><rect x="466" y="704" width="1366" height="207"/></clipPath><g clip-path="url(#cTxt)">
<text x="665.88" y="729.6" font-size="24" fill="#000" textLength="40.3" lengthAdjust="spacingAndGlyphs" >with</text>
<text y="729.6" font-size="24" fill="#000" ><tspan x="712.10" textLength="100.3" lengthAdjust="spacingAndGlyphs">following</tspan> <tspan x="818.80" textLength="110.5" lengthAdjust="spacingAndGlyphs">properties:</tspan></text>
<text y="789.6" font-size="24" fill="#000" ><tspan x="686.40" textLength="80.2" lengthAdjust="spacingAndGlyphs">10.0.4.6</tspan> <tspan x="772.80" textLength="41.0" lengthAdjust="spacingAndGlyphs">GET</tspan> <tspan x="820.00" textLength="90.0" lengthAdjust="spacingAndGlyphs">/adfs/ls/</tspan> <tspan x="916.20" textLength="45.4" lengthAdjust="spacingAndGlyphs">?lc=</tspan><tspan x="961.60" textLength="47.6" lengthAdjust="spacingAndGlyphs">1033</tspan><tspan x="1009.20" textLength="210.4" lengthAdjust="spacingAndGlyphs">&amp;client-request-id=</tspan><tspan x="1219.60" textLength="109.3" lengthAdjust="spacingAndGlyphs">353c058d-</tspan><tspan x="1328.90" textLength="55.8" lengthAdjust="spacingAndGlyphs">127c-</tspan><tspan x="1384.70" textLength="58.9" lengthAdjust="spacingAndGlyphs">435c-</tspan><tspan x="1443.60" textLength="60.9" lengthAdjust="spacingAndGlyphs">bb26-</tspan></text>
<text x="644.99" y="819.6" font-size="24" fill="#000" textLength="106.2" lengthAdjust="spacingAndGlyphs" >username=</text>
<text y="819.6" font-size="24" fill="#000" ><tspan x="1050.30" textLength="67.3" lengthAdjust="spacingAndGlyphs">&amp;wa=</tspan><tspan x="1117.65" textLength="81.8" lengthAdjust="spacingAndGlyphs">wsignin</tspan><tspan x="1199.40" textLength="30.4" lengthAdjust="spacingAndGlyphs">1.0</tspan><tspan x="1229.80" textLength="19.2" lengthAdjust="spacingAndGlyphs">&amp;</tspan><tspan x="1249.04" textLength="84.6" lengthAdjust="spacingAndGlyphs">wtrealm</tspan><tspan x="1333.60" textLength="17.9" lengthAdjust="spacingAndGlyphs">=</tspan><tspan x="1351.50" textLength="36.8" lengthAdjust="spacingAndGlyphs">urn</tspan><tspan x="1388.30" textLength="48.7" lengthAdjust="spacingAndGlyphs">%3a</tspan><tspan x="1437.00" textLength="120.9" lengthAdjust="spacingAndGlyphs">federation%</tspan></text>
<text y="849.6" font-size="24" fill="#000" ><tspan x="689.80" textLength="3.8" lengthAdjust="spacingAndGlyphs">.</tspan><tspan x="693.64" textLength="63.0" lengthAdjust="spacingAndGlyphs">wctx=</tspan><tspan x="756.60" textLength="120.0" lengthAdjust="spacingAndGlyphs">estsredirect</tspan><tspan x="876.60" textLength="59.0" lengthAdjust="spacingAndGlyphs">%3d2</tspan><tspan x="935.60" textLength="43.0" lengthAdjust="spacingAndGlyphs">%26</tspan><tspan x="978.60" textLength="138.0" lengthAdjust="spacingAndGlyphs">estsrequest%</tspan></text>
<text y="879.6" font-size="24" fill="#000" ><tspan x="686.20" textLength="13.2" lengthAdjust="spacingAndGlyphs">p</tspan><tspan x="699.40" textLength="88.8" lengthAdjust="spacingAndGlyphs">KLbS1y_</tspan><tspan x="788.20" textLength="64.7" lengthAdjust="spacingAndGlyphs">ILypJz</tspan><tspan x="852.90" textLength="131.3" lengthAdjust="spacingAndGlyphs">NHLT0vLTE7</tspan><tspan x="984.20" textLength="124.4" lengthAdjust="spacingAndGlyphs">VS87P1csvS</tspan><tspan x="1108.60" textLength="142.6" lengthAdjust="spacingAndGlyphs">s9MAbGKhLg</tspan><tspan x="1251.20" textLength="87.2" lengthAdjust="spacingAndGlyphs">EelItTGu</tspan><tspan x="1338.40" textLength="103.2" lengthAdjust="spacingAndGlyphs">EYpx3q6n</tspan><tspan x="1441.60" textLength="96.9" lengthAdjust="spacingAndGlyphs">LnjC1Wr-</tspan></text>
<text y="909.4" font-size="24" fill="#000" ><tspan x="681.40" textLength="12.4" lengthAdjust="spacingAndGlyphs">0</tspan><tspan x="693.80" textLength="22.7" lengthAdjust="spacingAndGlyphs">vc</tspan><tspan x="716.50" textLength="60.1" lengthAdjust="spacingAndGlyphs">Tiqoo</tspan><tspan x="776.60" textLength="51.4" lengthAdjust="spacingAndGlyphs">Lilxd</tspan><tspan x="828.00" textLength="72.4" lengthAdjust="spacingAndGlyphs">TCvGB</tspan><tspan x="900.40" textLength="89.5" lengthAdjust="spacingAndGlyphs">sbGm5h</tspan><tspan x="989.90" textLength="72.5" lengthAdjust="spacingAndGlyphs">YfZ19n</tspan><tspan x="1062.40" textLength="38.5" lengthAdjust="spacingAndGlyphs">TxP</tspan><tspan x="1100.90" textLength="52.2" lengthAdjust="spacingAndGlyphs">ME04</tspan><tspan x="1153.10" textLength="78.4" lengthAdjust="spacingAndGlyphs">K3eLSd</tspan><tspan x="1231.50" textLength="29.7" lengthAdjust="spacingAndGlyphs">C_</tspan><tspan x="1261.20" textLength="52.3" lengthAdjust="spacingAndGlyphs">KN0z</tspan><tspan x="1313.50" textLength="33.2" lengthAdjust="spacingAndGlyphs">Jbz</tspan><tspan x="1346.70" textLength="99.9" lengthAdjust="spacingAndGlyphs">YLTUItSix</tspan><tspan x="1446.60" textLength="43.5" lengthAdjust="spacingAndGlyphs">JDM</tspan></text>
</g>
<rect x="751.4" y="798.4" width="298.8" height="28.2" fill="#E7E7E7" />
<g filter="url(#blur6)" opacity="0.55">
<rect x="757" y="805.413" width="12.2489" height="12.9637" fill="#B4B4B4" />
<rect x="772.334" y="806.606" width="9.19727" height="14.9014" fill="#B4B4B4" />
<rect x="789.134" y="805.888" width="21.7729" height="13.3324" fill="#B4B4B4" />
<rect x="814.844" y="805.425" width="11.108" height="11.8617" fill="#B4B4B4" />
<rect x="834.444" y="808.227" width="22.9206" height="12.5761" fill="#B4B4B4" />
<rect x="860.719" y="807.508" width="13.5773" height="12.8835" fill="#B4B4B4" />
<rect x="882.279" y="805.347" width="23.8409" height="14.2882" fill="#B4B4B4" />
<rect x="912.821" y="805.711" width="17.1072" height="13.1304" fill="#B4B4B4" />
<rect x="932.554" y="808.462" width="24.8226" height="10.8239" fill="#B4B4B4" />
<rect x="961.478" y="807.289" width="24.3597" height="14.0044" fill="#B4B4B4" />
<rect x="1015.82" y="806.724" width="18.7804" height="10.2438" fill="#B4B4B4" />
<rect x="1038.74" y="805.173" width="22.6267" height="11.105" fill="#B4B4B4" />
</g>
<rect x="1832.4" y="704" width="33" height="206" fill="#BEBEBE" />
<rect x="1834" y="704" width="29.8" height="206" fill="#FFFFFF" />
<rect x="1832.4" y="704" width="33" height="32" fill="#CDCDCD" />
<rect x="1834" y="705.6" width="29.8" height="28.8" fill="#FFFFFF" />
<rect x="1832.4" y="878" width="33" height="32" fill="#CDCDCD" />
<rect x="1834" y="879.6" width="29.8" height="28.8" fill="#FFFFFF" />
<path d="M1841.9 723.6 L1848.9 716.4 L1855.9 723.6" fill="none" stroke="#606060" stroke-width="2.4"/>
<path d="M1841.9 890.4 L1848.9 897.6 L1855.9 890.4" fill="none" stroke="#606060" stroke-width="2.4"/>
<rect x="1832.4" y="738.6" width="33" height="82.2" fill="#A8A8A8" />
<rect x="1834" y="740.2" width="29.8" height="79" fill="#DCDCDC" />
<rect x="1841.9" y="771.6" width="14" height="3.4" fill="#606060" />
<rect x="1841.9" y="778" width="14" height="3.4" fill="#606060" />
<rect x="1841.9" y="784.4" width="14" height="3.4" fill="#606060" />
<text x="466.60" y="967.5" font-size="24" fill="#000" textLength="111.5" lengthAdjust="spacingAndGlyphs" >Log Name:</text>
<text x="680.40" y="967.5" font-size="24" fill="#000" textLength="226.7" lengthAdjust="spacingAndGlyphs" >AD FS Tracing/Debug</text>
<text x="466.60" y="1009.5" font-size="24" fill="#000" textLength="78.5" lengthAdjust="spacingAndGlyphs" >Source:</text>
<text x="680.40" y="1009.5" font-size="24" fill="#000" textLength="146.8" lengthAdjust="spacingAndGlyphs" >AD FS Tracing</text>
<text x="466.60" y="1051.5" font-size="24" fill="#000" textLength="90.5" lengthAdjust="spacingAndGlyphs" >Event ID:</text>
<text x="681.20" y="1051.5" font-size="24" fill="#000" textLength="23.0" lengthAdjust="spacingAndGlyphs" >54</text>
<text x="466.60" y="1093.5" font-size="24" fill="#000" textLength="58.3" lengthAdjust="spacingAndGlyphs" >Level:</text>
<text x="681.20" y="1093.5" font-size="24" fill="#000" textLength="124.4" lengthAdjust="spacingAndGlyphs" >Information</text>
<text x="466.60" y="1135.5" font-size="24" fill="#000" textLength="50.7" lengthAdjust="spacingAndGlyphs" >User:</text>
<text x="680.40" y="1135.5" font-size="24" fill="#000" textLength="287.1" lengthAdjust="spacingAndGlyphs" >JACKSTROMBERG\svc_adfs</text>
<text x="466.60" y="1177.5" font-size="24" fill="#000" textLength="92.9" lengthAdjust="spacingAndGlyphs" >OpCode:</text>
<text x="681.20" y="1177.5" font-size="24" fill="#000" textLength="40.3" lengthAdjust="spacingAndGlyphs" >Info</text>
<text x="466.60" y="1219.5" font-size="24" fill="#000" textLength="192.1" lengthAdjust="spacingAndGlyphs" >More Information:</text>
<text x="686.40" y="1220.1" font-size="24" fill="#0000FF" textLength="235.2" lengthAdjust="spacingAndGlyphs" >Event Log Online Help</text>
<rect x="686.4" y="1223.1" width="235.3" height="1.8" fill="#0000FF" />
<text x="997.00" y="1009.5" font-size="24" fill="#000" textLength="84.0" lengthAdjust="spacingAndGlyphs" >Logged:</text>
<text x="1172.80" y="1009.5" font-size="24" fill="#000" textLength="234.4" lengthAdjust="spacingAndGlyphs" >1/25/2017 11:56:31 PM</text>
<text x="997.00" y="1051.5" font-size="24" fill="#000" textLength="154.4" lengthAdjust="spacingAndGlyphs" >Task Category:</text>
<text x="1172.80" y="1051.5" font-size="24" fill="#000" textLength="57.5" lengthAdjust="spacingAndGlyphs" >None</text>
<text x="997.00" y="1093.5" font-size="24" fill="#000" textLength="106.2" lengthAdjust="spacingAndGlyphs" >Keywords:</text>
<text x="1172.80" y="1093.5" font-size="24" fill="#000" textLength="92.8" lengthAdjust="spacingAndGlyphs" >ADFSSTS</text>
<text x="997.00" y="1135.5" font-size="24" fill="#000" textLength="111.7" lengthAdjust="spacingAndGlyphs" >Computer:</text>
<text x="1172.80" y="1135.5" font-size="24" fill="#000" textLength="293.3" lengthAdjust="spacingAndGlyphs" >ADFS01.jackstromberg.local</text>
</g>
<g id="statusbar">
<rect x="16" y="1311.6" width="1946" height="46.8" fill="#A0A0A0" />
<rect x="18" y="1313.8" width="1942.4" height="42.6" fill="#FFFFFF" />
<text x="20.60" y="1345.6" font-size="24" fill="#000" textLength="390.6" lengthAdjust="spacingAndGlyphs" >Saves the log under a different name.</text>
<rect x="1520.4" y="1316.6" width="1.2" height="39" fill="#CFCFCF" />
<rect x="1786.8" y="1316.6" width="1.2" height="39" fill="#CFCFCF" />
<rect x="1956.6" y="1316.6" width="1.2" height="39" fill="#CFCFCF" />
</g>
<g id="context-menu">
<rect x="226.4" y="400.2" width="464" height="615.4" fill="#979797" />
<rect x="228.4" y="402.2" width="460" height="611.4" fill="#F0F0F0" />
<rect x="286.2" y="406.4" width="2" height="603.6" fill="#B9B9B9" />
<rect x="232" y="766" width="452" height="44" fill="#26A0DA" />
<rect x="234" y="768" width="448" height="40" fill="#DCEBFC" />
<text x="296.80" y="435" font-size="24" fill="#000" textLength="188.5" lengthAdjust="spacingAndGlyphs" >Open Saved Log...</text>
<text x="296.80" y="479.2" font-size="24" fill="#000" textLength="231.0" lengthAdjust="spacingAndGlyphs" >Create Custom View...</text>
<text x="296.80" y="523.2" font-size="24" fill="#000" textLength="235.2" lengthAdjust="spacingAndGlyphs" >Import Custom View...</text>
<text x="296.80" y="575.3" font-size="24" fill="#000" textLength="116.7" lengthAdjust="spacingAndGlyphs" >Clear Log...</text>
<text x="296.80" y="619.4" font-size="24" fill="#000" textLength="200.8" lengthAdjust="spacingAndGlyphs" >Filter Current Log...</text>
<text x="296.80" y="663.2" font-size="24" fill="#000" textLength="105.2" lengthAdjust="spacingAndGlyphs" >Properties</text>
<text x="296.80" y="707.3" font-size="24" fill="#000" textLength="115.0" lengthAdjust="spacingAndGlyphs" >Enable Log</text>
<text x="296.80" y="751.2" font-size="24" fill="#000" textLength="62.8" lengthAdjust="spacingAndGlyphs" >Find...</text>
<text x="296.80" y="795.2" font-size="24" fill="#000" textLength="204.8" lengthAdjust="spacingAndGlyphs" >Save All Events As...</text>
<text x="296.80" y="839.3" font-size="24" fill="#000" textLength="283.0" lengthAdjust="spacingAndGlyphs" >Attach a Task To this Log...</text>
<text x="296.80" y="891" font-size="24" fill="#000" textLength="49.3" lengthAdjust="spacingAndGlyphs" >View</text>
<text x="296.80" y="942.9" font-size="24" fill="#000" textLength="76.7" lengthAdjust="spacingAndGlyphs" >Refresh</text>
<text x="296.80" y="995" font-size="24" fill="#000" textLength="48.7" lengthAdjust="spacingAndGlyphs" >Help</text>
<rect x="288.2" y="540" width="395.8" height="1.9" fill="#B4B4B4" />
<rect x="288.2" y="856.4" width="395.8" height="1.9" fill="#B4B4B4" />
<rect x="288.2" y="908" width="395.8" height="1.9" fill="#B4B4B4" />
<rect x="288.2" y="960.2" width="395.8" height="1.9" fill="#B4B4B4" />
<path d="M658.4 876.6 L665.8 883.3000000000001 L658.4 890.0 Z" fill="#3A3A3A"/>
<path d="M658.4 981 L665.8 987.7 L658.4 994.4 Z" fill="#3A3A3A"/>
</g>
</svg>
</body></html>
